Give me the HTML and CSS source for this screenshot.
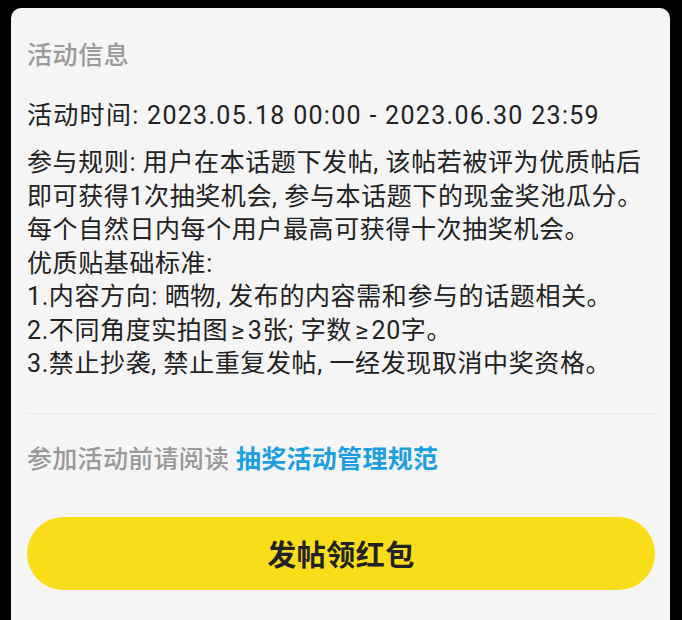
FILE: index.html
```html
<!DOCTYPE html>
<html lang="zh-CN">
<head>
<meta charset="utf-8">
<title>活动信息</title>
<link rel="stylesheet" href="styles.css">
</head>
<body>
<div class="card">
  <div class="title">活动信息</div>
  <div class="time">活动时间: 2023.05.18 00:00 - 2023.06.30 23:59</div>
  <div class="rules">
    <div class="line">参与规则: 用户在本话题下发帖, 该帖若被评为优质帖后</div>
    <div class="line">即可获得1次抽奖机会, 参与本话题下的现金奖池瓜分。</div>
    <div class="line">每个自然日内每个用户最高可获得十次抽奖机会。</div>
    <div class="line">优质贴基础标准:</div>
    <div class="line">1.内容方向: 晒物, 发布的内容需和参与的话题相关。</div>
    <div class="line">2.不同角度实拍图<span class="ge">≥</span>3张; 字数<span class="ge">≥</span>20字。</div>
    <div class="line">3.禁止抄袭, 禁止重复发帖, 一经发现取消中奖资格。</div>
  </div>
  <div class="divider"></div>
  <div class="notice">参加活动前请阅读 <span class="link">抽奖活动管理规范</span></div>
  <div class="button">发帖领红包</div>
</div>
</body>
</html>
```

FILE: styles.css
```css
html, body {
  margin: 0;
  padding: 0;
  background: #000;
}
body {
  width: 682px;
  height: 620px;
  overflow: hidden;
  font-family: Roboto, "Noto Sans CJK SC", sans-serif;
}
.card {
  margin: 8px 0 0 11px;
  width: 659px;
  height: 640px;
  box-sizing: border-box;
  background: #f5f5f5;
  border-radius: 10px 10px 0 0;
  padding: 33px 15px 0 16px;
  display: flex;
  flex-direction: column;
}
.title {
  font-size: 25px;
  line-height: 30px;
  color: #9a9a9a;
  font-weight: 500;
  letter-spacing: 0.6px;
}
.time {
  margin-top: 31px;
  font-size: 25px;
  line-height: 28px;
  color: #222;
  letter-spacing: 1.3px;
}
.rules {
  margin-top: 16px;
  font-size: 25px;
  line-height: 33.5px;
  color: #222;
  letter-spacing: 0.6px;
}
.line {
  white-space: nowrap;
}
.ge {
  margin: 0 3px;
}
.divider {
  margin-top: 32px;
  height: 1px;
  background: #e6e6e6;
}
.notice {
  margin-top: 31px;
  font-size: 25px;
  line-height: 30px;
  color: #999;
  font-weight: 500;
  letter-spacing: 0.3px;
}
.link {
  color: #1c9ee0;
  font-weight: 700;
}
.button {
  margin-top: 42px;
  height: 73px;
  border-radius: 37px;
  background: #f8dd18;
  display: flex;
  align-items: center;
  justify-content: center;
  font-size: 29px;
  font-weight: 700;
  color: #222;
  letter-spacing: 0.5px;
}
```
